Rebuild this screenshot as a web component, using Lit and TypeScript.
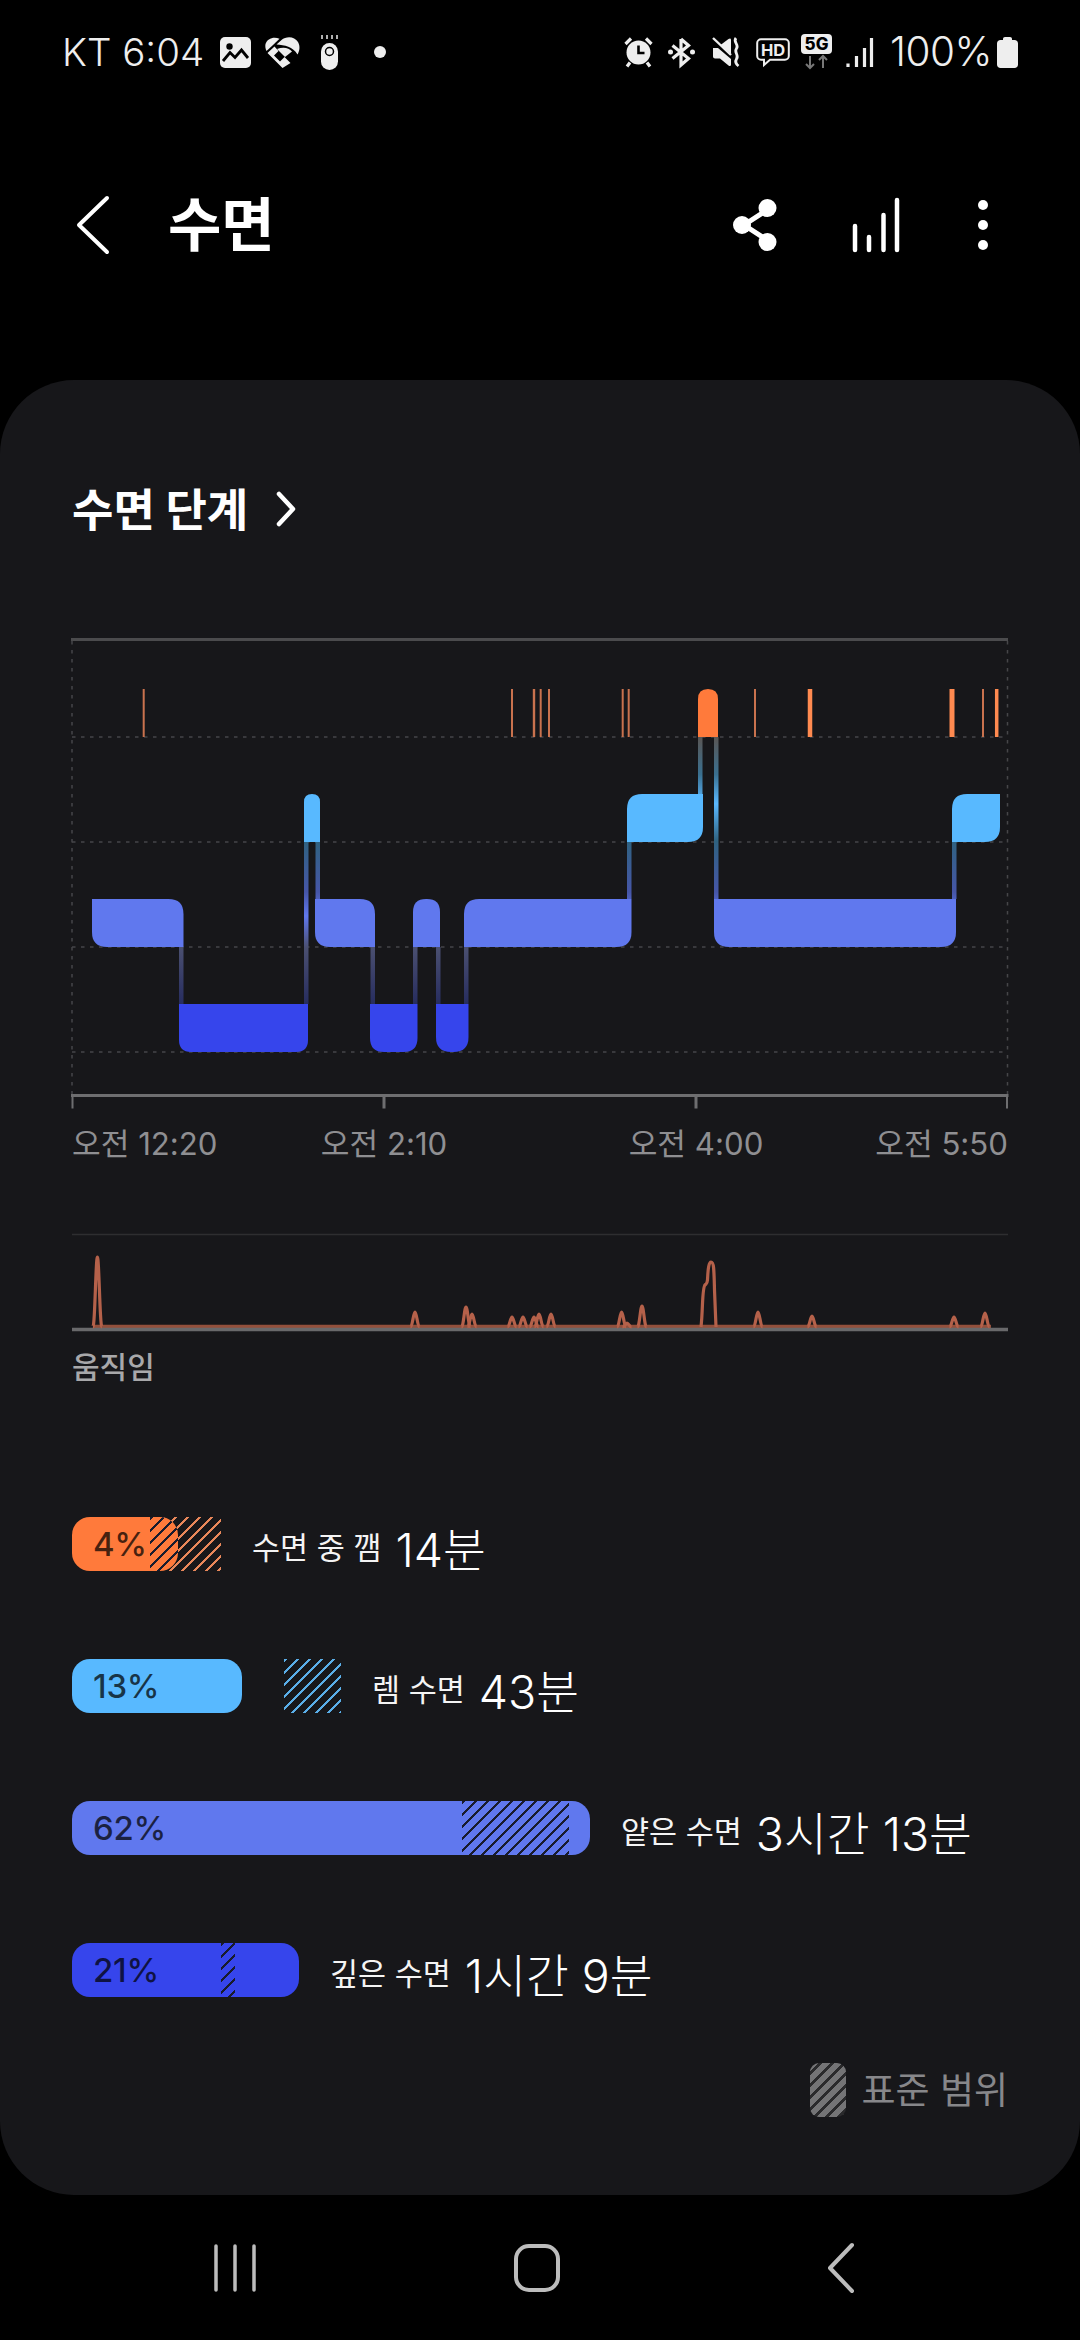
import { LitElement, html, css, svg } from "lit";
import { customElement } from "lit/decorators.js";

type Seg = { x0: number; x1: number; top: number; c: string; r: [number, number, number, number] };

const ROW = { awake: 689, rem: 794, light: 899, deep: 1004 };
const H = 48;
const COL = { awake: "#ff7a3b", rem: "#58b9ff", light: "#6078ee", deep: "#3645ec" };
const R = 15;

const seg = (k: keyof typeof ROW, x0: number, x1: number, r: [number, number, number, number]): Seg => ({
  x0, x1, top: ROW[k], c: COL[k], r,
});

// corner radii are [top-left, top-right, bottom-left, bottom-right]
const SEGS: Seg[] = [
  seg("light", 92, 183.5, [0, R, R, 0]),
  seg("deep", 179, 308, [0, 0, 12, 12]),
  seg("rem", 304, 320, [8, 8, 0, 0]),
  seg("light", 315, 375, [0, R, R, 0]),
  seg("deep", 370, 417.5, [0, 0, 14, 14]),
  seg("light", 413, 440, [13, 13, 0, 0]),
  seg("deep", 436, 468.5, [0, 0, 15, 15]),
  seg("light", 464, 631.5, [R, 0, 0, R]),
  seg("rem", 627, 703, [R, 0, 0, R]),
  seg("awake", 698, 718, [10, 10, 0, 0]),
  seg("light", 714, 956, [0, 0, R, R]),
  seg("rem", 952, 1000, [R, 0, 0, R]),
];

// [x, top, bottom]
const LINKS: [number, number, number][] = [
  [179, 947, 1004],
  [304, 842, 1004],
  [315.5, 842, 899],
  [370.5, 947, 1004],
  [413, 947, 1004],
  [436, 947, 1004],
  [464, 947, 1004],
  [627, 842, 899],
  [698, 737, 794],
  [714, 737, 899],
  [952, 842, 899],
];

// [x, width]
const TICKS: [number, number][] = [
  [143.7, 2], [512, 2], [534, 2.4], [540.7, 2], [549, 2], [622.7, 2], [628.7, 2],
  [755, 2], [810, 4.5], [952, 5], [983, 2], [996.7, 3.5],
];

const PEAKS: [number, number][] = [
  [97.4, 1257], [415, 1312], [466, 1307], [472, 1314], [512, 1317], [523, 1317], [534, 1317],
  [539, 1314], [551, 1314], [621.6, 1312], [627, 1323], [642, 1306], [758, 1312], [812, 1316],
  [954, 1317], [985, 1313],
];

function roundedPath(s: Seg) {
  const [tl, tr, bl, br] = s.r;
  const { x0, x1, top } = s;
  const b = top + H;
  return `M${x0 + tl} ${top}H${x1 - tr}Q${x1} ${top} ${x1} ${top + tr}V${b - br}Q${x1} ${b} ${x1 - br} ${b}H${x0 + bl}Q${x0} ${b} ${x0} ${b - bl}V${top + tl}Q${x0} ${top} ${x0 + tl} ${top}Z`;
}

function peakPath([x, top]: [number, number]) {
  const b = 1327;
  return `M${x - 4.5} ${b}C${x - 2.5} ${b} ${x - 1.6} ${top} ${x} ${top}C${x + 1.6} ${top} ${x + 2.5} ${b} ${x + 4.5} ${b}`;
}

const LEGEND = [
  { cls: "awake", pct: "4%", w: 105.5, name: "수면 중 깸", val: "14분", total: 149, hs: 78, hw: 71, outer: true, inner: true },
  { cls: "rem", pct: "13%", w: 170, name: "렘 수면", val: "43분", total: 269, hs: 212, hw: 57, outer: true, inner: false },
  { cls: "light", pct: "62%", w: 518, name: "얕은 수면", val: "3시간 13분", total: 518, hs: 389.5, hw: 107.5, outer: false, inner: true },
  { cls: "deep", pct: "21%", w: 227, name: "깊은 수면", val: "1시간 9분", total: 227, hs: 149, hw: 14, outer: false, inner: true },
];

@customElement("app-root")
export class AppRoot extends LitElement {
  static styles = css`
    :host {
      display: flex;
      flex-direction: column;
      width: 1080px;
      height: 2340px;
      background: #000;
      overflow: hidden;
      font-family: "Inter", "Noto Sans CJK KR", sans-serif;
      color: #fff;
    }
    svg { display: block; flex: none; overflow: visible; }
    .status {
      height: 104px;
      display: flex;
      align-items: center;
      padding: 0 62px;
      color: #eee;
      flex: none;
    }
    .st-text { font-weight: 300; white-space: nowrap; line-height: 44px; }
    .st-left, .st-right { display: flex; align-items: center; }
    .st-right { margin-left: auto; }
    .clock { width: 140px; font-size: 38.5px; }
    .batt-text { width: 100px; margin: 0 7px 0 17px; font-size: 40.5px; letter-spacing: -0.5px; }
    .appbar {
      height: 242px;
      margin-bottom: 34px;
      flex: none;
      display: flex;
      align-items: center;
      padding-left: 77px;
    }
    .title { font-size: 58px; font-weight: 700; line-height: 70px; margin-left: 59px; }
    .actions { margin-left: auto; margin-right: 92px; display: flex; align-items: center; gap: 75px; }
    .stats { margin-left: -2px; }
    .menu { margin-left: 3px; }
    .card {
      height: 1815px;
      flex: none;
      box-sizing: border-box;
      background: #17171a;
      border-radius: 74px;
      padding: 96px 72px 0;
      display: flex;
      flex-direction: column;
    }
    .card-title { display: flex; align-items: center; height: 62px; gap: 28px; font-size: 45px; font-weight: 700; }
    .card-title svg { margin-top: 3px; }
    .chart { margin-top: 98px; }
    .axis {
      margin-top: 14px;
      display: grid;
      grid-template-columns: repeat(6, 1fr);
      height: 40px;
      line-height: 40px;
      font-size: 31.2px;
      color: #8f8f92;
      font-weight: 400;
      width: 936px;
    }
    .axis span { grid-row: 1; white-space: nowrap; }
    .a1 { grid-column: 1 / span 2; text-align: left; }
    .a2 { grid-column: 2 / span 2; text-align: center; }
    .a3 { grid-column: 4 / span 2; text-align: center; }
    .a4 { grid-column: 5 / span 2; text-align: right; }
    .mv { margin-top: 68px; }
    .mv-label { margin-top: 15px; font-size: 30px; line-height: 40px; height: 40px; color: #a8a8aa; font-weight: 500; }
    .rows { margin-top: 130px; display: flex; flex-direction: column; gap: 88px; }
    .row { display: flex; align-items: center; height: 54px; }
    .track { position: relative; height: 54px; margin-right: 31px; flex: none; }
    .bar {
      position: relative;
      height: 54px;
      border-radius: 18px;
      overflow: hidden;
      box-sizing: border-box;
      padding-left: 21px;
      display: flex;
      align-items: center;
      font-size: 33px;
      font-weight: 500;
      letter-spacing: -0.3px;
      color: rgba(0, 0, 0, 0.72);
    }
    .bar.awake { background: #ff7a3b; }
    .bar.rem { background: #58b9ff; }
    .bar.light { background: #6078ee; }
    .bar.deep { background: #3645ec; }
    .bar span { position: relative; z-index: 1; }
    .hatch { position: absolute; top: 0; height: 54px; }
    .hatch.out.awake { background: repeating-linear-gradient(135deg, #e8875a 0 2.5px, transparent 2.5px 8.5px); }
    .hatch.out.rem { background: repeating-linear-gradient(135deg, #5aaee8 0 2.5px, transparent 2.5px 8.5px); }
    .hatch.in { background: repeating-linear-gradient(135deg, #191c2e 0 2.5px, transparent 2.5px 8.5px); }
    .name { font-size: 30.5px; font-weight: 400; white-space: nowrap; color: #f4f4f4; margin: 4px 14px 0 0; }
    .val { font-size: 46.5px; font-weight: 300; white-space: nowrap; color: #fff; margin-top: 4px; }
    .note { margin-top: 64px; display: flex; justify-content: flex-end; align-items: center; gap: 15px; }
    .swatch {
      width: 36px;
      height: 54px;
      border-radius: 9px;
      background: repeating-linear-gradient(135deg, #747476 0 6px, #2a2a2c 6px 8.5px);
    }
    .note-text { font-size: 37px; color: #87878a; line-height: 54px; white-space: nowrap; margin-top: 3px; }
    .nav {
      flex: 1;
      display: flex;
      align-items: center;
      padding-left: 214px;
    }
    .gap1 { width: 258px; flex: none; }
    .gap2 { width: 268px; flex: none; }
  `;

  private chart() {
    return html`<svg class="chart" width="938" height="474" viewBox="72 636 938 474">
      <defs>
        <linearGradient id="lk" gradientUnits="userSpaceOnUse" x1="0" x2="0" y1="737" y2="1004">
          <stop offset="0" stop-color="#5a5654"></stop>
          <stop offset="0.14" stop-color="#3a7090"></stop>
          <stop offset="0.25" stop-color="#5ab8ff"></stop>
          <stop offset="0.39" stop-color="#2f6280"></stop>
          <stop offset="0.58" stop-color="#4656a8"></stop>
          <stop offset="0.67" stop-color="#6078ee"></stop>
          <stop offset="0.79" stop-color="#4a4f70"></stop>
          <stop offset="1" stop-color="#272d60"></stop>
        </linearGradient>
      </defs>
      <g stroke="#464649" stroke-width="1.5" stroke-dasharray="3.5 5.5" fill="none">
        <path d="M72 641V1094M1007.5 641V1094"></path>
        <path d="M72 737H1007M72 842H1007M72 947H1007M72 1052H1007"></path>
      </g>
      <path d="M71 639.5H1008" stroke="#4b4b4d" stroke-width="3"></path>
      <path d="M71 1095.5H1008.5" stroke="#6e6e70" stroke-width="3"></path>
      <path d="M72.5 1095V1108.5M1007 1095V1108.5" stroke="#6e6e70" stroke-width="2"></path>
      <path d="M384 1095V1108.5M696 1095V1108.5" stroke="#6e6e70" stroke-width="3"></path>
      ${TICKS.map(([x, w]) => svg`<rect x=${x - w / 2} y="689" width=${w} height="48" fill=${w > 3 ? "#ff8a50" : "#c9724e"}></rect>`)}
      ${LINKS.map(([x, a, b]) => svg`<rect x=${x} y=${a} width="4.5" height=${b - a} fill="url(#lk)"></rect>`)}
      ${SEGS.map((s) => svg`<path d=${roundedPath(s)} fill=${s.c}></path>`)}
    </svg>`;
  }

  private movement() {
    return html`<svg class="mv" width="936" height="100" viewBox="72 1232 936 100">
      <path d="M72 1234.5H1008" stroke="#2e2e30" stroke-width="1.5"></path>
      <path d="M93 1326.500H991" stroke="#93503c" stroke-width="3.500"></path>
      <path d="M72 1329.500H1008" stroke="#69696b" stroke-width="3.500"></path>
      <g fill="none" stroke="#b5614a" stroke-width="3.200">
        ${PEAKS.map((p) => svg`<path d=${peakPath(p)}></path>`)}
        <path d="M701 1327C703 1310 702 1288 705 1285C707 1283 707 1284 707.5 1280C708 1268 709 1262 711 1262C714 1262 714 1270 714.5 1290L716 1327"></path>
      </g>
    </svg>`;
  }

  private statusLeft() {
    return html`<div class="st-left">
      <span class="st-text clock">KT 6:04</span>
      <svg width="31" height="31" viewBox="0 0 31 31" style="margin-left:18px">
        <rect width="31" height="31" rx="5" fill="#eee"></rect>
        <circle cx="9.5" cy="9.5" r="3.2" fill="#000"></circle>
        <path d="M3 24L10 15.500L15 20.500L21.500 13L28 21" fill="none" stroke="#000" stroke-width="2.800"></path>
      </svg>
      <svg width="35" height="31" viewBox="0 0 35 31" style="margin-left:14px">
        <path d="M14.500 1.800C9 -1 2 1.500 .5 7C0 9.500 .5 12 1.500 14L8 8Z" fill="#eee"></path>
        <path d="M2.500 16L9.500 9.500L13.500 14L9 18.500L15 24.500L19.500 20L25.500 26L17.500 31Z" fill="#eee"></path>
        <path d="M16.500 3C21 -1 29.500 -1 33 5C35.500 9.500 34.500 14 32.500 17.500C28 9.500 19.500 8 11.500 7.500Z" fill="#eee"></path>
        <path d="M12 12L20 20L27 14.500C24 10.500 18 9.500 12 12Z" fill="#eee"></path>
      </svg>
      <svg width="19" height="35" viewBox="0 0 19 35" style="margin-left:20px">
        <path d="M2 0V4M7 0V4M12 0V4M17 0V4" stroke="#ddd" stroke-width="1.600"></path>
        <rect x="1" y="8" width="17" height="27" rx="8.500" fill="#eee"></rect>
        <circle cx="9.500" cy="16.500" r="4" fill="none" stroke="#000" stroke-width="1.500"></circle>
      </svg>
      <svg width="12" height="12" viewBox="0 0 12 12" style="margin-left:35px">
        <circle cx="6" cy="6" r="6" fill="#eee"></circle>
      </svg>
    </div>`;
  }

  private statusRight() {
    return html`<div class="st-right">
      <svg width="29" height="30" viewBox="0 0 29 30">
        <circle cx="14.500" cy="15.500" r="12" fill="#eee"></circle>
        <path d="M14.500 8.500V16H20.500" fill="none" stroke="#000" stroke-width="2.600"></path>
        <path d="M1.500 7L7 1.500M27.500 7L22 1.500" stroke="#eee" stroke-width="3.200"></path>
        <path d="M6 25.500L3 29.500M23 25.500L26 29.500" stroke="#eee" stroke-width="3.200"></path>
      </svg>
      <svg width="27" height="30" viewBox="0 0 27 30" style="margin-left:15px">
        <path d="M13 2V28L20.500 21.500L4.500 8.500M13 2L20.500 8.500L4.500 21.500" fill="none" stroke="#eee" stroke-width="3.200"></path>
        <circle cx="2.500" cy="15" r="2.500" fill="#eee"></circle>
        <circle cx="24.500" cy="15" r="2.500" fill="#eee"></circle>
      </svg>
      <svg width="29" height="30" viewBox="0 0 29 30" style="margin-left:17px">
        <path d="M1 11H6L19 22V27.500C19 29 18 29.500 16.500 28.500L8 21.500H3C2 21.500 1 20.500 1 19.500Z" fill="#eee"></path>
        <path d="M8.500 8L16.500 2C18 1 19 1.500 19 3V17Z" fill="#eee"></path>
        <path d="M1 1L19 18" stroke="#eee" stroke-width="2.400"></path>
        <path d="M24 1C20.500 5 27.500 7.500 24.500 11.500C21.500 15.500 27.500 18 24.500 22C23 24.500 24 27 26.500 29" fill="none" stroke="#eee" stroke-width="2.800"></path>
      </svg>
      <svg width="34" height="29" viewBox="0 0 34 29" style="margin-left:15px">
        <path d="M5 1.200H29C31 1.200 32.800 3 32.800 5V18C32.800 20 31 21.800 29 21.800H14L8 27V21.800H5C3 21.800 1.200 20 1.200 18V5C1.200 3 3 1.200 5 1.200Z" fill="none" stroke="#eee" stroke-width="2"></path>
        <text x="17" y="17.500" text-anchor="middle" font-size="16.500" font-weight="700" fill="#eee" font-family="Inter, sans-serif">HD</text>
      </svg>
      <svg width="31" height="36" viewBox="0 0 31 36" style="margin-left:11px">
        <rect width="31" height="20" rx="4" fill="#eee"></rect>
        <text x="15.500" y="16" text-anchor="middle" font-size="17" font-weight="800" fill="#000" font-family="Inter, sans-serif">5G</text>
        <path d="M9 22V34M5 30L9 34L13 30" fill="none" stroke="#777" stroke-width="2"></path>
        <path d="M22 34V22M18 26L22 22L26 26" fill="none" stroke="#777" stroke-width="2"></path>
      </svg>
      <svg width="27" height="29" viewBox="0 0 27 29" style="margin-left:14px">
        <path d="M2 29V25.500M10.500 29V18M18.500 29V10M25.500 29V0" fill="none" stroke="#eee" stroke-width="3.200"></path>
      </svg>
      <span class="st-text batt-text">100%</span>
      <svg width="21" height="31" viewBox="0 0 21 31">
        <path d="M6 3V2C6 .8 6.800 0 8 0H13C14.200 0 15 .8 15 2V3H17.500C19.500 3 21 4.500 21 6.500V27.500C21 29.500 19.500 31 17.500 31H3.500C1.500 31 0 29.500 0 27.500V6.500C0 4.500 1.500 3 3.500 3Z" fill="#eee"></path>
      </svg>
    </div>`;
  }

  render() {
    return html`
      <div class="status">${this.statusLeft()}${this.statusRight()}</div>
      <div class="appbar">
        <svg width="32" height="58" viewBox="0 0 32 58">
          <path d="M30 2L2 29L30 56" fill="none" stroke="#fff" stroke-width="4" stroke-linecap="round" stroke-linejoin="round"></path>
        </svg>
        <div class="title">수면</div>
        <div class="actions">
          <svg width="46" height="52" viewBox="0 0 46 52">
            <path d="M34 11L11 26L34 41" fill="none" stroke="#fff" stroke-width="5"></path>
            <circle cx="34.500" cy="9" r="9" fill="#fff"></circle>
            <circle cx="9" cy="26" r="9" fill="#fff"></circle>
            <circle cx="34.500" cy="43" r="9" fill="#fff"></circle>
          </svg>
          <svg class="stats" width="48" height="58" viewBox="0 0 48 58">
            <path d="M3 54V30M17 54V41M31.500 54V19M45 54V4" fill="none" stroke="#fff" stroke-width="4.500" stroke-linecap="round"></path>
          </svg>
          <svg class="menu" width="10" height="50" viewBox="0 0 10 50">
            <circle cx="5" cy="5" r="5" fill="#fff"></circle>
            <circle cx="5" cy="25" r="5" fill="#fff"></circle>
            <circle cx="5" cy="45" r="5" fill="#fff"></circle>
          </svg>
        </div>
      </div>
      <div class="card">
        <div class="card-title">
          <span>수면 단계</span>
          <svg width="20" height="36" viewBox="0 0 20 36">
            <path d="M3 3L17 18L3 33" fill="none" stroke="#fff" stroke-width="4.500" stroke-linecap="round" stroke-linejoin="round"></path>
          </svg>
        </div>
        ${this.chart()}
        <div class="axis">
          <span class="a1">오전 12:20</span>
          <span class="a2">오전 2:10</span>
          <span class="a3">오전 4:00</span>
          <span class="a4">오전 5:50</span>
        </div>
        ${this.movement()}
        <div class="mv-label">움직임</div>
        <div class="rows">
          ${LEGEND.map(
            (l) => html`<div class="row">
              <div class="track" style="width:${l.total}px">
                ${l.outer ? html`<div class="hatch out ${l.cls}" style="left:${l.hs}px;width:${l.hw}px"></div>` : ""}
                <div class="bar ${l.cls}" style="width:${l.w}px">
                  ${l.inner ? html`<div class="hatch in" style="left:${l.hs}px;width:${l.hw}px"></div>` : ""}
                  <span>${l.pct}</span>
                </div>
              </div>
              <span class="name">${l.name}</span>
              <span class="val">${l.val}</span>
            </div>`
          )}
        </div>
        <div class="note">
          <div class="swatch"></div>
          <span class="note-text">표준 범위</span>
        </div>
      </div>
      <div class="nav">
        <svg width="42" height="48" viewBox="0 0 42 48">
          <path d="M2 2V46M21 2V46M40 2V46" fill="none" stroke="#bcbcbc" stroke-width="3.500" stroke-linecap="round"></path>
        </svg>
        <div class="gap1"></div>
        <svg width="46" height="48" viewBox="0 0 46 48">
          <rect x="2" y="2" width="42" height="44" rx="13" fill="none" stroke="#bcbcbc" stroke-width="4"></rect>
        </svg>
        <div class="gap2"></div>
        <svg width="26" height="50" viewBox="0 0 26 50">
          <path d="M24 2L2 25L24 48" fill="none" stroke="#bcbcbc" stroke-width="4" stroke-linecap="round" stroke-linejoin="round"></path>
        </svg>
      </div>
    `;
  }
}
